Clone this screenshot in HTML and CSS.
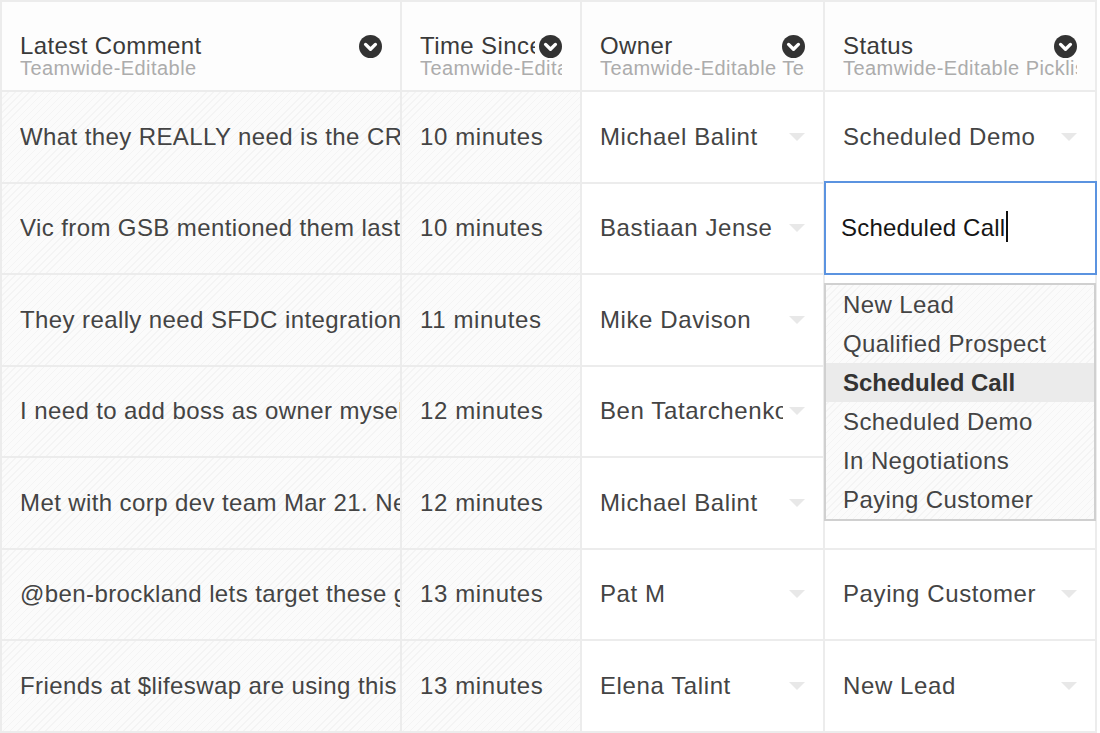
FILE: index.html
```html
<!DOCTYPE html>
<html>
<head>
<meta charset="utf-8">
<link rel="stylesheet" href="styles.css">
</head>
<body>
<div class="sheet">
  <div class="hcell">
    <div class="htop"><span class="htitle">Latest Comment</span><svg class="hicon" viewBox="0 0 22 22"><circle cx="11" cy="11" r="11" fill="#333"/><path d="M6.3 9 L11 13.6 L15.7 9" fill="none" stroke="#fff" stroke-width="3.2" stroke-linecap="round" stroke-linejoin="round"/></svg></div>
    <div class="hsub">Teamwide-Editable</div>
  </div>
  <div class="hcell">
    <div class="htop"><span class="htitle">Time Since Last Update</span><svg class="hicon" viewBox="0 0 22 22"><circle cx="11" cy="11" r="11" fill="#333"/><path d="M6.3 9 L11 13.6 L15.7 9" fill="none" stroke="#fff" stroke-width="3.2" stroke-linecap="round" stroke-linejoin="round"/></svg></div>
    <div class="hsub">Teamwide-Editable Formula</div>
  </div>
  <div class="hcell">
    <div class="htop"><span class="htitle">Owner</span><svg class="hicon" viewBox="0 0 22 22"><circle cx="11" cy="11" r="11" fill="#333"/><path d="M6.3 9 L11 13.6 L15.7 9" fill="none" stroke="#fff" stroke-width="3.2" stroke-linecap="round" stroke-linejoin="round"/></svg></div>
    <div class="hsub">Teamwide-Editable Team Member</div>
  </div>
  <div class="hcell">
    <div class="htop"><span class="htitle">Status</span><svg class="hicon" viewBox="0 0 22 22"><circle cx="11" cy="11" r="11" fill="#333"/><path d="M6.3 9 L11 13.6 L15.7 9" fill="none" stroke="#fff" stroke-width="3.2" stroke-linecap="round" stroke-linejoin="round"/></svg></div>
    <div class="hsub">Teamwide-Editable Picklist</div>
  </div>

  <div class="cell ro comment"><span class="txt">What they REALLY need is the CRM integration</span></div>
  <div class="cell ro"><span class="txt">10 minutes</span></div>
  <div class="cell pick"><span class="txt">Michael Balint</span><span class="arrow"></span></div>
  <div class="cell pick"><span class="txt">Scheduled Demo</span><span class="arrow"></span></div>

  <div class="cell ro comment"><span class="txt">Vic from GSB mentioned them last week</span></div>
  <div class="cell ro"><span class="txt">10 minutes</span></div>
  <div class="cell pick"><span class="txt">Bastiaan Jense</span><span class="arrow"></span></div>
  <div class="cell pick editing">
    <div class="editor"><span class="edtext">Scheduled Call</span><span class="caret"></span></div>
    <div class="menu">
      <div class="opt">New Lead</div>
      <div class="opt">Qualified Prospect</div>
      <div class="opt sel">Scheduled Call</div>
      <div class="opt">Scheduled Demo</div>
      <div class="opt">In Negotiations</div>
      <div class="opt">Paying Customer</div>
    </div>
  </div>

  <div class="cell ro comment"><span class="txt">They really need SFDC integration to work</span></div>
  <div class="cell ro"><span class="txt">11 minutes</span></div>
  <div class="cell pick"><span class="txt">Mike Davison</span><span class="arrow"></span></div>
  <div class="cell pick"></div>

  <div class="cell ro comment"><span class="txt">I need to add boss as owner myself</span></div>
  <div class="cell ro"><span class="txt">12 minutes</span></div>
  <div class="cell pick"><span class="txt">Ben Tatarchenko</span><span class="arrow"></span></div>
  <div class="cell pick"></div>

  <div class="cell ro comment"><span class="txt">Met with corp dev team Mar 21. Next steps</span></div>
  <div class="cell ro"><span class="txt">12 minutes</span></div>
  <div class="cell pick"><span class="txt">Michael Balint</span><span class="arrow"></span></div>
  <div class="cell pick"></div>

  <div class="cell ro comment"><span class="txt">@ben-brockland lets target these guys</span></div>
  <div class="cell ro"><span class="txt">13 minutes</span></div>
  <div class="cell pick"><span class="txt">Pat M</span><span class="arrow"></span></div>
  <div class="cell pick"><span class="txt">Paying Customer</span><span class="arrow"></span></div>

  <div class="cell ro comment"><span class="txt">Friends at $lifeswap are using this</span></div>
  <div class="cell ro"><span class="txt">13 minutes</span></div>
  <div class="cell pick"><span class="txt">Elena Talint</span><span class="arrow"></span></div>
  <div class="cell pick"><span class="txt">New Lead</span><span class="arrow"></span></div>
</div>
</body>
</html>
```

FILE: styles.css
```css
* { box-sizing: border-box; }
html, body {
  margin: 0;
  padding: 0;
  background: #fff;
}
body {
  font-family: "Liberation Sans", Arial, sans-serif;
  color: #444;
  overflow: hidden;
}
.sheet {
  display: grid;
  grid-template-columns: 400px 180px 243px 272px;
  grid-template-rows: 90px repeat(7, 91.5px);
  width: 1097px;
  border-top: 2px solid #ececec;
  border-left: 2px solid #ececec;
}
.hcell, .cell {
  border-right: 2px solid #ececec;
  border-bottom: 2px solid #ececec;
  min-width: 0;
}
.hcell {
  background: #fdfdfd;
  padding: 32px 18px 0 18px;
  overflow: hidden;
}
.htop {
  display: flex;
  align-items: center;
  gap: 4px;
  height: 24px;
}
.htitle {
  flex: 1;
  min-width: 0;
  overflow: hidden;
  white-space: nowrap;
  font-size: 24px;
  line-height: 24px;
  letter-spacing: 0.4px;
  color: #3a3a3a;
}
.hicon {
  width: 23px;
  height: 23px;
  flex: none;
}
.hsub {
  font-size: 20px;
  line-height: 20px;
  letter-spacing: 0.45px;
  color: #acacac;
  white-space: nowrap;
  overflow: hidden;
}
.cell {
  display: flex;
  align-items: center;
  padding: 0 18px;
  font-size: 24px;
  letter-spacing: 0.6px;
  background: #fff;
}
.cell.ro {
  background-color: #fbfbfb;
  background-image: repeating-linear-gradient(135deg, #fbfbfb 0px, #fbfbfb 4px, #f4f4f4 4px, #f4f4f4 5px);
}
.cell.comment {
  padding-right: 0;
  letter-spacing: 0.4px;
}
.txt {
  flex: 1;
  min-width: 0;
  white-space: nowrap;
  overflow: hidden;
}
.arrow {
  flex: none;
  width: 0;
  height: 0;
  margin-left: 6px;
  border-left: 8px solid transparent;
  border-right: 8px solid transparent;
  border-top: 8px solid #e8e8e8;
}
.editing {
  position: relative;
  overflow: visible;
}
.editor {
  position: absolute;
  left: -1px;
  right: -2px;
  top: -3px;
  bottom: -2px;
  border: 2px solid #5b93e0;
  background: #fff;
  display: flex;
  align-items: center;
  padding-left: 15px;
  color: #161616;
  font-size: 24px;
  letter-spacing: 0.2px;
  z-index: 2;
}
.caret {
  display: inline-block;
  width: 2px;
  height: 31px;
  background: #111;
  margin-left: 1px;
  margin-top: -2px;
}
.menu {
  position: absolute;
  left: -1px;
  right: -1px;
  top: 99px;
  border: 2px solid #d0d0d0;
  background-color: #fbfbfb;
  background-image: repeating-linear-gradient(135deg, #fbfbfb 0px, #fbfbfb 4px, #f4f4f4 4px, #f4f4f4 5px);
  z-index: 3;
}
.opt {
  height: 39px;
  line-height: 39px;
  padding-left: 17px;
  font-size: 24px;
  letter-spacing: 0.4px;
  color: #444;
  white-space: nowrap;
}
.opt.sel {
  background: #ebebeb;
  font-weight: bold;
  color: #333;
  letter-spacing: 0;
}
```
